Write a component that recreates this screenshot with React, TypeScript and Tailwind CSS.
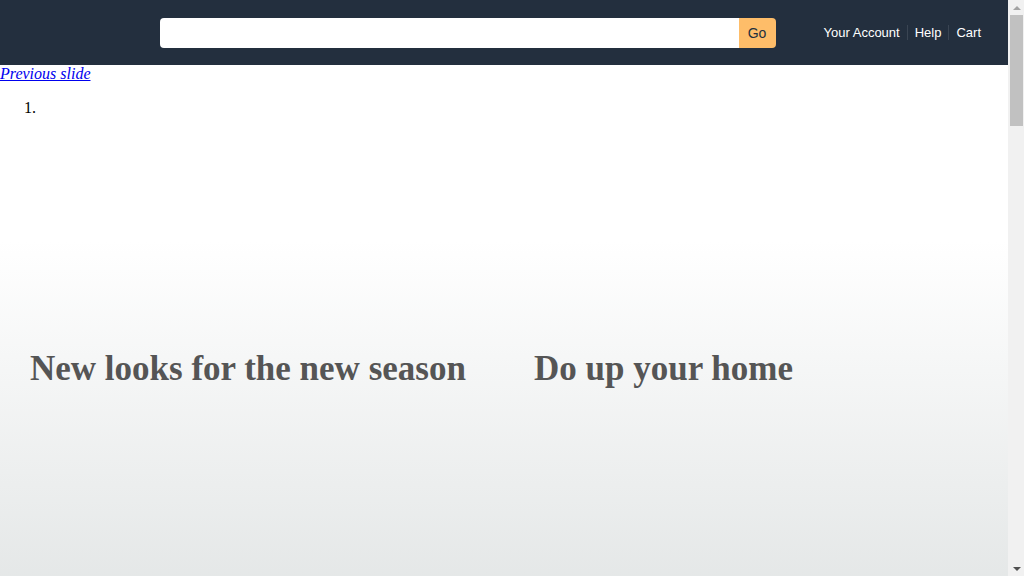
/**
 * Storefront home — header with search, hero carousel (unstyled fallback).
 */

const LINKS = ["Your Account", "Help", "Cart"];
const SLIDES = ["New looks for the new season", "Do up your home"];

// classic browser scrollbar drawn at the page edge
function Scrollbar() {
  return (
    <div className="flex h-full w-[17px] shrink-0 flex-col items-center bg-[#f1f1f1]">
      <div className="flex h-[15px] w-full items-center justify-center">
        <div className="h-0 w-0 border-x-[4px] border-b-[4px] border-x-transparent border-b-[#a3a3a3]" />
      </div>
      <div className="h-[111px] w-[13px] bg-[#c1c1c1]" />
      <div className="flex-1" />
      <div className="flex h-[15px] w-full items-center justify-center">
        <div className="h-0 w-0 border-x-[4px] border-t-[4px] border-x-transparent border-t-[#505050]" />
      </div>
    </div>
  );
}

export default function App() {
  return (
    <div className="flex h-screen overflow-hidden bg-white font-['Liberation_Serif',serif] text-black">
      <div className="min-h-[2800px] flex-1 leading-[1.15]">
        <header className="flex h-[65px] items-center bg-[#232f3e] pr-5 font-['Liberation_Sans',Arial,sans-serif]">
          <div className="w-[160px] shrink-0" />
          <form className="flex h-[30px] flex-1">
            <input className="h-full flex-1 rounded-l-[4px] bg-white px-2 text-sm outline-none" />
            <button type="button" className="h-full w-[37px] rounded-r-[4px] bg-[#febd69] text-sm text-[#232f3e]">
              Go
            </button>
          </form>
          <nav className="ml-[41px] flex items-center">
            {LINKS.map((l, i) => (
              <a
                key={l}
                className={`px-[7px] text-[13px] leading-[15px] text-white ${i > 0 ? "border-l border-[#3a4553]" : ""}`}
              >
                {l}
              </a>
            ))}
          </nav>
        </header>

        <a href="#" className="italic text-[#0000ee] underline">
          Previous slide
        </a>
        <ol className="my-4 list-decimal pl-10">
          <li>&nbsp;</li>
        </ol>

        <section className="mt-[123px] flex h-[360px] bg-gradient-to-b from-[#e3e6e6]/0 to-[#e3e6e6] pt-[108px]">
          {SLIDES.map((s) => (
            <h2 key={s} className="w-[504px] pl-[30px] text-[35px] font-bold text-[#555]">
              {s}
            </h2>
          ))}
        </section>
      </div>
      <Scrollbar />
    </div>
  );
}
